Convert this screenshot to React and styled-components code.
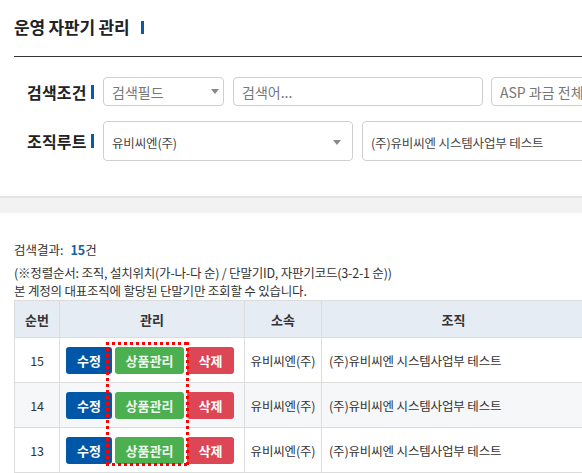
import React from 'react'
import styled, { createGlobalStyle } from 'styled-components'

const GlobalStyle = createGlobalStyle`
  html, body {
    margin: 0;
    padding: 0;
    overflow: hidden;
    background: #ffffff;
  }
  body {
    font-family: "Noto Sans CJK KR", "Noto Sans", sans-serif;
    color: #333333;
  }
`

const Page = styled.div`
  width: 820px;
`

const Header = styled.div`
  margin-left: 14px;
  padding: 17px 0 19px;
  border-bottom: 1px solid #333333;
  display: flex;
  align-items: center;
`

const Title = styled.h1`
  margin: 0;
  font-size: 17px;
  line-height: 20px;
  font-weight: 700;
  letter-spacing: -0.2px;
  color: #222222;
`

const Bar = styled.span`
  display: inline-block;
  width: 3px;
  height: ${p => p.$h || 14}px;
  background: #0a5aa8;
  margin-left: ${p => p.$gap || 4}px;
`

const SearchArea = styled.div`
  padding: 20px 0 35px 27px;
  display: flex;
  flex-direction: column;
  gap: 15px;
`

const SearchRow = styled.div`
  display: flex;
  align-items: center;
  height: ${p => p.$h}px;
`

const Label = styled.div`
  width: 76px;
  flex: none;
  display: flex;
  align-items: center;
  font-size: 16px;
  font-weight: 700;
  color: #222222;
  letter-spacing: 0.2px;
`

const Fields = styled.div`
  display: flex;
  gap: ${p => p.$gap || 9}px;
  height: 100%;
`

const Box = styled.div`
  box-sizing: border-box;
  width: ${p => p.$w}px;
  height: 100%;
  flex: none;
  border: 1px solid #cfcfcf;
  border-radius: 4px;
  display: flex;
  align-items: center;
  justify-content: space-between;
  padding: ${p => p.$tall ? '3px 11px 0 8px' : '0 4px 0 8px'};
  font-size: ${p => p.$tall ? 12.5 : 14}px;
  letter-spacing: ${p => p.$tall ? -0.15 : 0}px;
  color: ${p => p.$muted ? '#777777' : '#444444'};
  white-space: nowrap;
`

const Caret = styled.span`
  flex: none;
  width: 0;
  height: 0;
  border-left: 4px solid transparent;
  border-right: 4px solid transparent;
  border-top: 5px solid #888888;
`

const Band = styled.div`
  height: 15px;
  border-top: 2px solid #e4e4e4;
  background: #f2f2f2;
`

const Results = styled.div`
  padding: 28px 0 0 14px;
`

const Count = styled.div`
  font-size: 12.5px;
  line-height: 18px;
  margin-bottom: 5px;
  color: #333333;
`

const Num = styled.b`
  color: #1560a8;
  margin-left: 7px;
`

const Note = styled.div`
  font-size: 12.5px;
  line-height: 18px;
  letter-spacing: -0.2px;
  color: #333333;
  white-space: nowrap;
`

const TableWrap = styled.div`
  position: relative;
`

const Table = styled.table`
  border-collapse: collapse;
  table-layout: fixed;
  width: 567px;
`

const Th = styled.th`
  width: ${p => p.$w}px;
  height: 36px;
  padding: 0;
  background: #e6ecf4;
  border: 1px solid #dcdcdc;
  font-size: 13px;
  font-weight: 700;
  color: #333333;
  text-align: center;
`

const Tr = styled.tr`
  background: ${p => p.$striped ? '#f6f7f9' : '#ffffff'};
`

const Td = styled.td`
  height: 44px;
  padding: ${p => p.$left ? '0 0 0 7px' : '0'};
  border: 1px solid #dcdcdc;
  font-size: 12.5px;
  letter-spacing: -0.15px;
  color: #333333;
  text-align: ${p => p.$left ? 'left' : 'center'};
  white-space: nowrap;
`

const Actions = styled.div`
  display: flex;
  padding-left: 6px;
  gap: 3px;
`

const Button = styled.button`
  width: ${p => p.$w}px;
  height: 27px;
  padding: 0;
  border: none;
  border-radius: 3px;
  background: ${p => p.$bg};
  color: ${p => p.$fg || '#ffffff'};
  font-family: inherit;
  font-size: 13px;
  font-weight: 700;
`

const Marker = styled.div`
  position: absolute;
  left: 92px;
  top: 42px;
  width: 83px;
  height: 124px;
  pointer-events: none;
  background-image:
    repeating-linear-gradient(90deg, #ff0000 0 3px, transparent 3px 6px),
    repeating-linear-gradient(90deg, #ff0000 0 3px, transparent 3px 6px),
    repeating-linear-gradient(180deg, #ff0000 0 3px, transparent 3px 6px),
    repeating-linear-gradient(180deg, #ff0000 0 3px, transparent 3px 6px);
  background-size: 100% 3px, 100% 3px, 3px 100%, 3px 100%;
  background-position: left top, left bottom, left top, right top;
  background-repeat: no-repeat;
`

const rows = [15, 14, 13]

const App = () => {
  return (
    <Page>
      <GlobalStyle />
      <Header>
        <Title>운영 자판기 관리</Title>
        <Bar $gap={12} $h={13} />
      </Header>

      <SearchArea>
        <SearchRow $h={29}>
          <Label>검색조건<Bar /></Label>
          <Fields $gap={9}>
            <Box $w={121} $muted>검색필드<Caret /></Box>
            <Box $w={250} $muted style={{ marginRight: -1 }}>검색어...</Box>
            <Box $w={200} $muted>ASP 과금 전체<Caret /></Box>
          </Fields>
        </SearchRow>
        <SearchRow $h={40}>
          <Label>조직루트<Bar /></Label>
          <Fields $gap={9}>
            <Box $w={250} $tall>유비씨엔(주)<Caret /></Box>
            <Box $w={250} $tall>(주)유비씨엔 시스템사업부 테스트</Box>
          </Fields>
        </SearchRow>
      </SearchArea>

      <Band />

      <Results>
        <Count>검색결과:<Num>15</Num>건</Count>
        <Note>(※정렬순서: 조직, 설치위치(가-나-다 순) / 단말기ID, 자판기코드(3-2-1 순))</Note>
        <Note>본 계정의 대표조직에 할당된 단말기만 조회할 수 있습니다.</Note>
        <TableWrap>
          <Table>
            <thead>
              <tr>
                <Th $w={44}>순번</Th>
                <Th $w={184}>관리</Th>
                <Th $w={76}>소속</Th>
                <Th $w={263}>조직</Th>
              </tr>
            </thead>
            <tbody>
              {rows.map((n, i) => (
                <Tr key={n} $striped={i % 2 === 1}>
                  <Td>{n}</Td>
                  <Td>
                    <Actions>
                      <Button $w={46} $bg="#0057a8">수정</Button>
                      <Button $w={69} $bg="#4caf50" $fg="#eef7ee">상품관리</Button>
                      <Button $w={47} $bg="#dc4655">삭제</Button>
                    </Actions>
                  </Td>
                  <Td>유비씨엔(주)</Td>
                  <Td $left>(주)유비씨엔 시스템사업부 테스트</Td>
                </Tr>
              ))}
            </tbody>
          </Table>
          <Marker />
        </TableWrap>
      </Results>
    </Page>
  )
}

export default App
